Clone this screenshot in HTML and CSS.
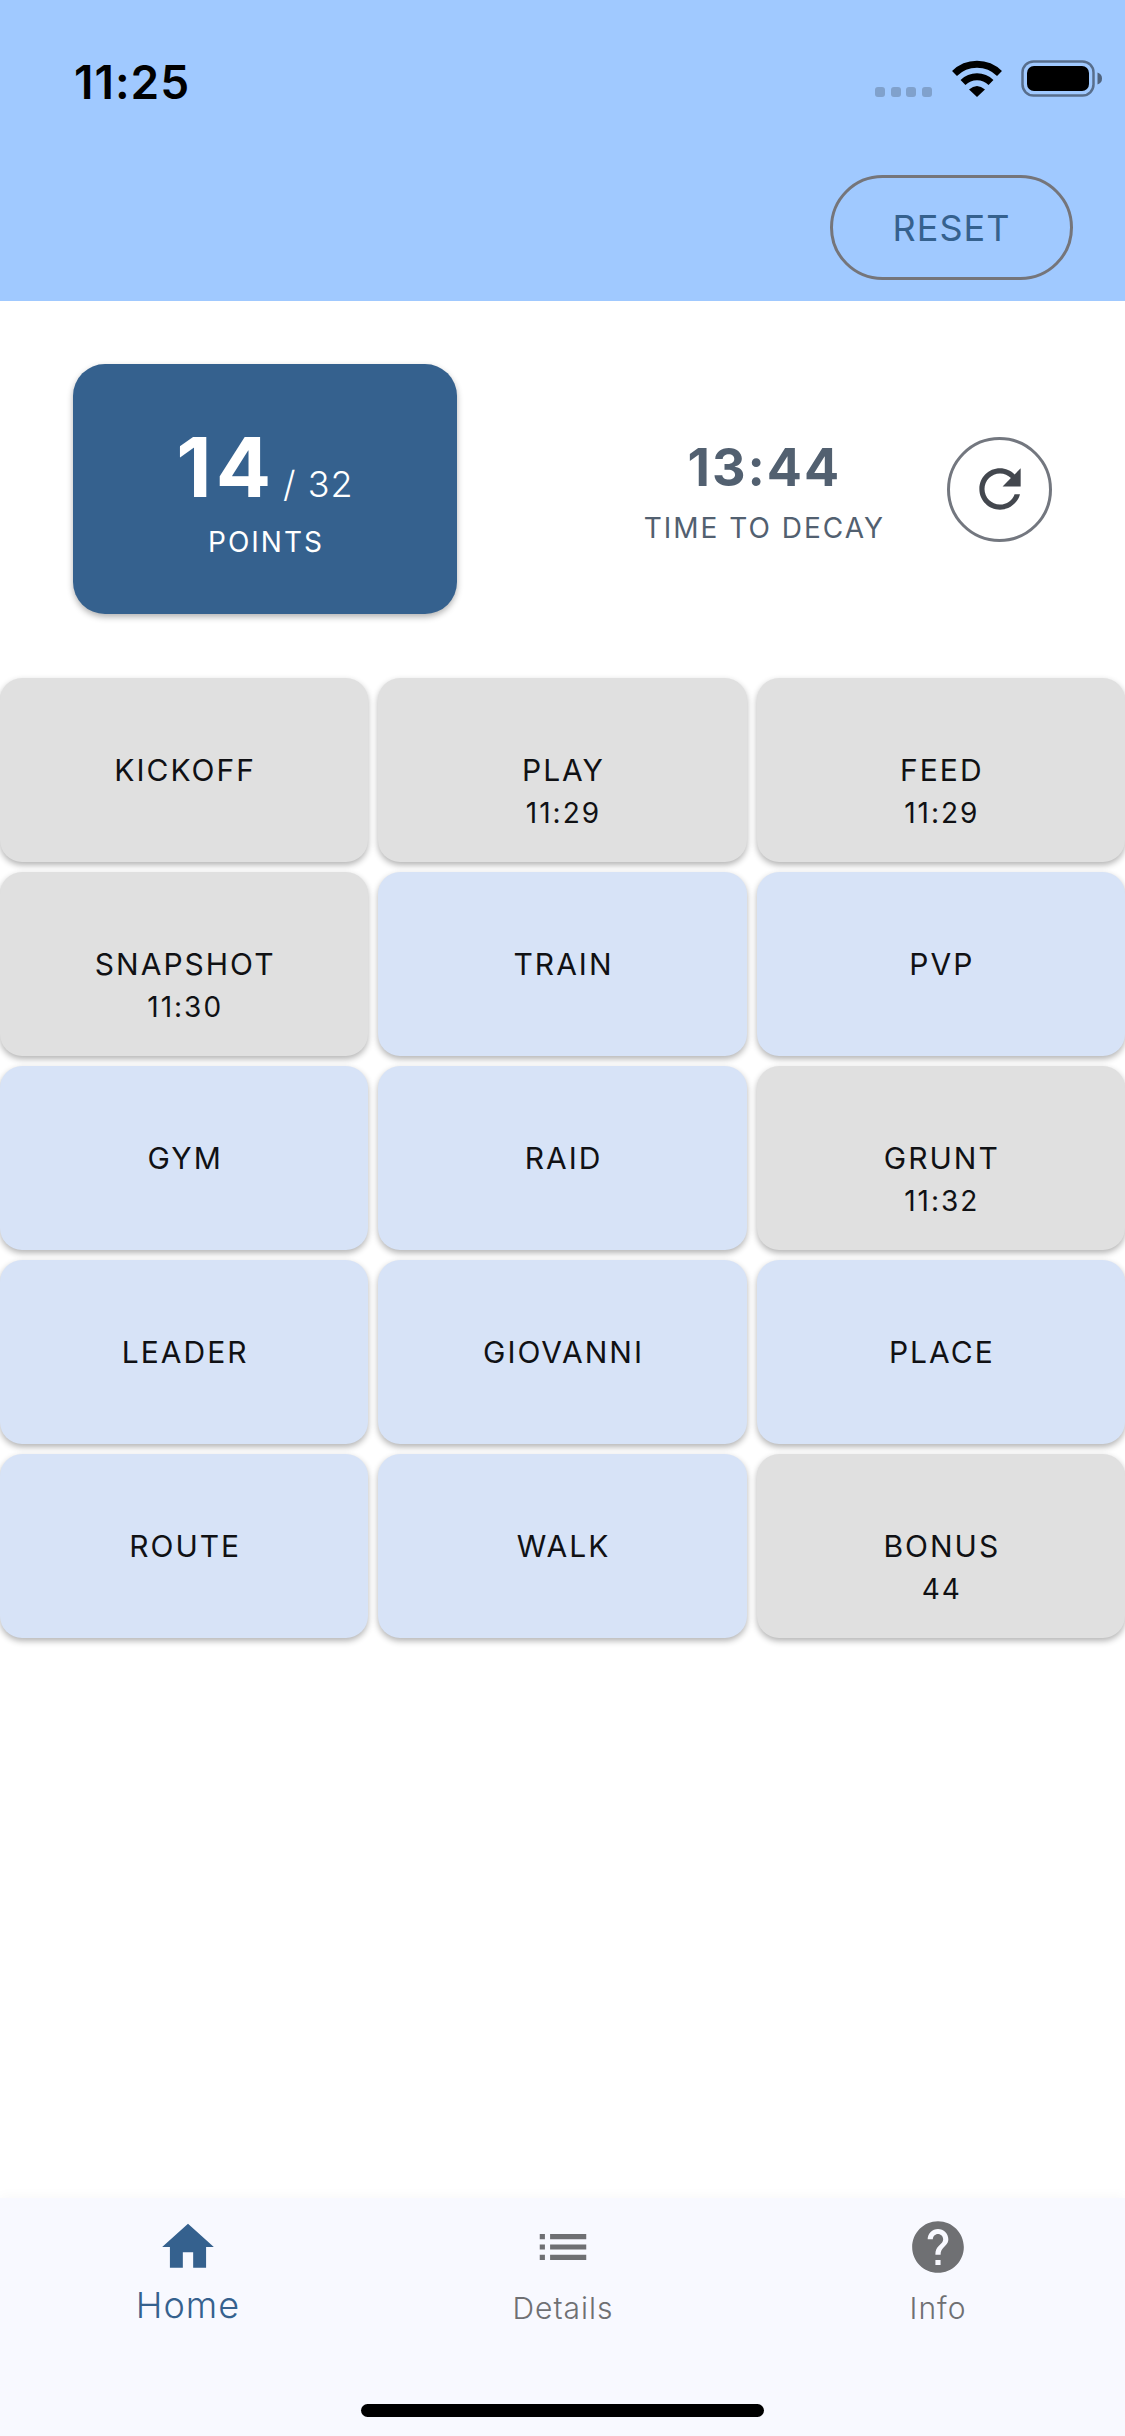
FILE: index.html
```html
<!DOCTYPE html>
<html lang="en">
<head>
<meta charset="utf-8">
<meta name="viewport" content="width=device-width, initial-scale=1">
<title>Home</title>
<link rel="stylesheet" href="styles.css">
</head>
<body>
<div class="app">
  <header class="header">
    <div class="status">
      <time class="clock">11:25</time>
      <div class="indicators">
        <svg class="signal" viewBox="0 0 58 10" aria-hidden="true"><rect width="10" height="10" rx="3"/><rect x="16" width="10" height="10" rx="3"/><rect x="31" width="10" height="10" rx="3"/><rect x="47" width="10" height="10" rx="3"/></svg>
        <svg class="wifi" viewBox="0 0 50 37" aria-hidden="true"><g fill="none" stroke="#000" stroke-width="7"><path d="M2.500 13.500A32 32 0 0 1 47.500 13.500"/><path d="M11 22.500A20 20 0 0 1 39 22.500"/></g><path d="M25 37L17 29.500Q25 22.500 33 29.500Z"/></svg>
        <svg class="battery" viewBox="0 0 82 37" aria-hidden="true"><rect x="1.500" y="1.500" width="71" height="34" rx="11" fill="none" stroke="#000" stroke-opacity=".45" stroke-width="2.500"/><rect x="6" y="6" width="62" height="25" rx="7"/><path d="M76.500 12.500Q81 14 81 18.500T76.500 24.500Z" fill-opacity=".5"/></svg>
      </div>
    </div>
    <div class="toolbar"><button class="reset" type="button">RESET</button></div>
  </header>

  <main class="main">
    <section class="summary">
      <div class="points">
        <div class="score"><strong class="score-now">14</strong><span class="score-max">/ 32</span></div>
        <div class="caption">POINTS</div>
      </div>
      <div class="decay">
        <div class="timer">
          <div class="timer-value">13:44</div>
          <div class="caption">TIME TO DECAY</div>
        </div>
        <button class="refresh" type="button" aria-label="Refresh">
          <svg class="icon" viewBox="0 0 24 24" aria-hidden="true"><path d="M17.650 6.350C16.200 4.900 14.210 4 12 4c-4.420 0-7.990 3.580-7.990 8s3.570 8 7.990 8c3.730 0 6.840-2.550 7.730-6h-2.080c-.82 2.330-3.040 4-5.650 4-3.310 0-6-2.690-6-6s2.690-6 6-6c1.660 0 3.140.69 4.220 1.780L13 11h7V4l-2.350 2.350z"/></svg>
        </button>
      </div>
    </section>

    <section class="tasks">
      <button class="task done" type="button"><span class="task-name">KICKOFF</span><span class="task-note"></span></button>
      <button class="task done" type="button"><span class="task-name">PLAY</span><span class="task-note">11:29</span></button>
      <button class="task done" type="button"><span class="task-name">FEED</span><span class="task-note">11:29</span></button>
      <button class="task done" type="button"><span class="task-name">SNAPSHOT</span><span class="task-note">11:30</span></button>
      <button class="task" type="button"><span class="task-name">TRAIN</span><span class="task-note"></span></button>
      <button class="task" type="button"><span class="task-name">PVP</span><span class="task-note"></span></button>
      <button class="task" type="button"><span class="task-name">GYM</span><span class="task-note"></span></button>
      <button class="task" type="button"><span class="task-name">RAID</span><span class="task-note"></span></button>
      <button class="task done" type="button"><span class="task-name">GRUNT</span><span class="task-note">11:32</span></button>
      <button class="task" type="button"><span class="task-name">LEADER</span><span class="task-note"></span></button>
      <button class="task" type="button"><span class="task-name">GIOVANNI</span><span class="task-note"></span></button>
      <button class="task" type="button"><span class="task-name">PLACE</span><span class="task-note"></span></button>
      <button class="task" type="button"><span class="task-name">ROUTE</span><span class="task-note"></span></button>
      <button class="task" type="button"><span class="task-name">WALK</span><span class="task-note"></span></button>
      <button class="task done" type="button"><span class="task-name">BONUS</span><span class="task-note">44</span></button>
    </section>
  </main>

  <footer class="footer">
    <nav class="tabs">
      <a class="tab active" href="#home" aria-current="page"><svg class="icon" viewBox="0 0 24 24" aria-hidden="true"><path d="M10 20v-6h4v6h5v-8h3L12 3 2 12h3v8z"/></svg><span class="tab-name">Home</span></a>
      <a class="tab" href="#details"><svg class="icon" viewBox="0 0 24 24" aria-hidden="true"><path d="M3 13h2v-2H3v2zm0 4h2v-2H3v2zm0-8h2V7H3v2zm4 4h14v-2H7v2zm0 4h14v-2H7v2zM7 7v2h14V7H7z"/></svg><span class="tab-name">Details</span></a>
      <a class="tab" href="#info"><svg class="icon" viewBox="0 0 24 24" aria-hidden="true"><path d="M12 2C6.480 2 2 6.480 2 12s4.480 10 10 10 10-4.480 10-10S17.520 2 12 2zm1 17h-2v-2h2v2zm2.070-7.750l-.9.92C13.450 12.900 13 13.500 13 15h-2v-.5c0-1.100.45-2.100 1.170-2.830l1.240-1.260c.37-.36.59-.86.59-1.410 0-1.100-.9-2-2-2s-2 .9-2 2H8c0-2.210 1.790-4 4-4s4 1.790 4 4c0 .88-.36 1.680-.93 2.250z"/></svg><span class="tab-name">Info</span></a>
    </nav>
    <div class="home-bar"></div>
  </footer>
</div>
</body>
</html>
```
FILE: styles.css
```css
* {
  box-sizing: border-box;
}

body {
  margin: 0;
  background: #fff;
  font-family: Inter, "Liberation Sans", sans-serif;
  font-size: 28px;
}

button {
  margin: 0;
  padding: 0;
  font: inherit;
  cursor: pointer;
}

.app {
  display: flex;
  flex-direction: column;
  min-height: 100vh;
}

/* Header */
.header {
  background: #a0c9ff;
}

.status {
  display: flex;
  justify-content: space-between;
  align-items: flex-start;
  padding: 60px 22px 0 74px;
}

.clock {
  font-size: 46px;
  line-height: 44px;
  font-weight: 600;
  letter-spacing: 1px;
  color: #000;
}

.indicators {
  display: flex;
  align-items: flex-end;
  gap: 19px;
}

.signal {
  width: 58px;
  height: 10px;
  fill: #80a1cc;
}

.wifi {
  width: 50px;
  height: 37px;
}

.battery {
  width: 82px;
  height: 37px;
}

.toolbar {
  display: flex;
  justify-content: flex-end;
  padding: 71px 52px 21px;
}

.reset {
  min-width: 243px;
  height: 105px;
  border: 3px solid #75757a;
  border-radius: 53px;
  background: transparent;
  color: #35618e;
  font-size: 36px;
  letter-spacing: 1px;
}

/* Summary */
.main {
  flex: 1;
}

.summary {
  display: flex;
  justify-content: space-between;
  align-items: center;
  padding: 63px 73px 64px;
}

.points {
  display: flex;
  flex-direction: column;
  align-items: center;
  justify-content: center;
  min-width: 384px;
  height: 250px;
  border-radius: 32px;
  background: #35618e;
  color: #fff;
  box-shadow: 0 3px 6px rgba(0, 0, 0, 0.3);
}

.score {
  display: flex;
  align-items: baseline;
  gap: 8px;
}

.score-now {
  font-size: 82px;
  line-height: 106px;
  font-weight: 700;
  letter-spacing: 4px;
}

.score-max {
  font-size: 36px;
  line-height: 44px;
  font-weight: 300;
  letter-spacing: 1px;
}

.caption {
  padding-left: 2px;
  font-size: 28px;
  line-height: 42px;
  letter-spacing: 2px;
}

.decay {
  display: flex;
  align-items: center;
  gap: 62px;
}

.timer {
  color: #526070;
  text-align: center;
}

.timer-value {
  padding-left: 2px;
  font-size: 52px;
  line-height: 78px;
  font-weight: 700;
  letter-spacing: 2px;
}

.icon {
  display: block;
  width: 62px;
  height: 62px;
  fill: currentColor;
}

.refresh {
  display: grid;
  place-items: center;
  width: 105px;
  height: 105px;
  border: 3px solid #73777f;
  border-radius: 50%;
  background: transparent;
  color: #43474e;
}

/* Task grid */
.tasks {
  display: grid;
  grid-template-columns: repeat(3, 1fr);
  gap: 10px;
}

.task {
  display: flex;
  flex-direction: column;
  align-items: center;
  height: 184px;
  padding-left: 2px;
  border: 0;
  border-radius: 22px;
  background: #d7e3f7;
  color: #101114;
  box-shadow: 0 3px 6px rgba(0, 0, 0, 0.3);
  letter-spacing: 2px;
}

.task.done {
  background: #e0e0e0;
}

.task::before {
  content: "";
  flex: 1;
}

.task-name {
  font-size: 30px;
  line-height: 44px;
}

.task-note {
  flex: 1;
  font-size: 28px;
  line-height: 42px;
}

/* Bottom tabs */
.footer {
  background: #f8f9ff;
  box-shadow: 0 -2px 12px rgba(0, 0, 0, 0.03);
}

.tabs {
  display: grid;
  grid-template-columns: repeat(3, 1fr);
  padding-top: 18px;
}

.tab {
  display: flex;
  flex-direction: column;
  align-items: center;
  gap: 7px;
  color: #6f7073;
  text-decoration: none;
}

.tab-name {
  padding-left: 1px;
  font-size: 30px;
  line-height: 46px;
  font-weight: 300;
  letter-spacing: 1px;
}

.active {
  color: #35618e;
}

.active .tab-name {
  font-size: 36px;
  line-height: 40px;
}

.home-bar {
  width: 403px;
  height: 13px;
  margin: 73px auto 19px;
  border-radius: 7px;
  background: #000;
}
```
